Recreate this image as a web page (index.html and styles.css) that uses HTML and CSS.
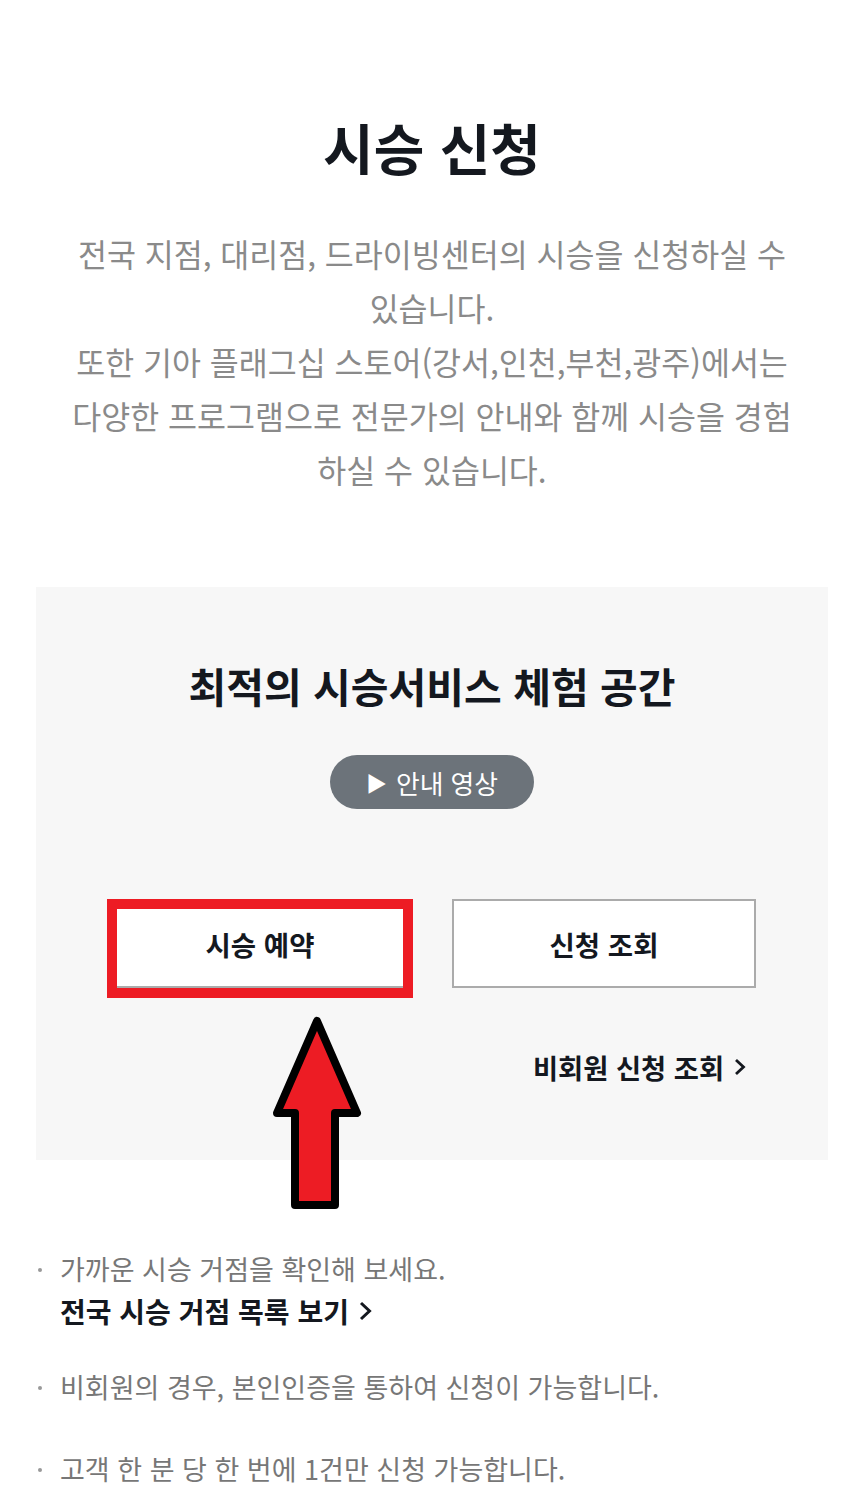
FILE: index.html
```html
<!DOCTYPE html>
<html lang="ko">
<head>
    <meta charset="UTF-8">
    <meta name="viewport" content="width=device-width, initial-scale=1.0">
    <title>시승 신청</title>
    <link rel="stylesheet" href="styles.css">
</head>
<body>
    <div class="page">
        <h1 class="title">시승 신청</h1>
        <p class="intro">
            전국 지점, 대리점, 드라이빙센터의 시승을 신청하실 수 있습니다.<br>
            또한 기아 플래그십 스토어(강서,인천,부천,광주)에서는 다양한 프로그램으로 전문가의 안내와 함께 시승을 경험하실 수 있습니다.
        </p>

        <div class="panel-wrap">
            <div class="panel">
                <h2 class="panel-title">최적의 시승서비스 체험 공간</h2>
                <button class="video-btn"><span class="play">&#9654;</span>안내 영상</button>

                <div class="actions">
                    <div class="btn-row">
                        <div class="btn-slot">
                            <button class="action-btn">시승 예약</button>
                            <!-- annotation box -->
                            <span class="highlight"></span>
                        </div>
                        <div class="btn-slot">
                            <button class="action-btn">신청 조회</button>
                        </div>
                    </div>
                    <a class="more-link guest-link" href="#">비회원 신청 조회
                        <svg class="chev" width="12" height="20" viewBox="0 0 12 20"><path d="M2 3 L9.5 10 L2 17" fill="none" stroke="#14181f" stroke-width="2.8"/></svg>
                    </a>
                </div>
            </div>

            <!-- annotation arrow -->
            <svg class="arrow" width="92" height="200" viewBox="0 0 92 200">
                <polygon points="46,6 86,98 64,98 64,190 24,190 24,98 6,98" fill="#ed1c24" stroke="#000" stroke-width="8" stroke-linejoin="round"/>
            </svg>
        </div>

        <ul class="notes">
            <li>
                <div>
                    가까운 시승 거점을 확인해 보세요.
                    <a class="more-link" href="#">전국 시승 거점 목록 보기
                        <svg class="chev" width="13" height="22" viewBox="0 0 13 22"><path d="M2 3 L10.5 11 L2 19" fill="none" stroke="#14181f" stroke-width="3"/></svg>
                    </a>
                </div>
            </li>
            <li><div>비회원의 경우, 본인인증을 통하여 신청이 가능합니다.</div></li>
            <li><div>고객 한 분 당 한 번에 1건만 신청 가능합니다.</div></li>
        </ul>
    </div>
</body>
</html>
```

FILE: styles.css
```css
body {
    margin: 0;
    padding: 0;
    background-color: #fff;
    font-family: "Noto Sans CJK KR", "Noto Sans", sans-serif;
    color: #14181f;
}

.page {
    padding: 0 36px;
}

.title {
    margin: 114px 0 0;
    font-size: 55px;
    line-height: 65px;
    font-weight: 700;
    text-align: center;
}

.intro {
    margin: 47px 28px 0;
    font-size: 31.5px;
    line-height: 54px;
    color: #8a8a8a;
    text-align: center;
}

/* Panel */
.panel-wrap {
    position: relative;
    margin-top: 91px;
}

.panel {
    display: flex;
    flex-direction: column;
    align-items: center;
    background-color: #f7f7f7;
    padding: 73px 0 75px;
}

.panel-title {
    margin: 0;
    font-size: 41px;
    line-height: 50px;
    font-weight: 700;
}

.video-btn {
    display: flex;
    align-items: center;
    justify-content: center;
    gap: 9px;
    margin-top: 45px;
    width: 204px;
    height: 54px;
    border: none;
    border-radius: 27px;
    background-color: #6c737a;
    color: #fff;
    font-family: inherit;
    font-size: 25.8px;
    padding: 0;
}

.play {
    font-size: 21px;
}

.actions {
    display: flex;
    flex-direction: column;
    width: 648px;
    margin-top: 90px;
}

.btn-row {
    display: flex;
    gap: 40px;
}

.btn-slot {
    position: relative;
    flex: 1;
}

.action-btn {
    display: block;
    width: 100%;
    height: 89px;
    border: 2px solid #ababab;
    background-color: #fff;
    font-family: inherit;
    font-size: 27.5px;
    font-weight: 700;
    color: #14181f;
}

.highlight {
    position: absolute;
    top: 0;
    left: -1px;
    width: 306px;
    height: 99px;
    box-sizing: border-box;
    border: 10px solid #ed1c24;
}

.more-link {
    display: flex;
    align-items: center;
    gap: 10px;
    font-size: 27.3px;
    line-height: 36px;
    font-weight: 700;
    color: #14181f;
    text-decoration: none;
}

.guest-link {
    align-self: flex-end;
    margin: 61px 10px 0 0;
}

.arrow {
    position: absolute;
    left: 235px;
    top: 428px;
}

/* Notes */
.notes {
    list-style: none;
    margin: 88px 0 0;
    padding: 0;
    font-size: 27px;
    line-height: 42px;
    color: #777;
}

.notes li {
    display: flex;
    margin-bottom: 40px;
}

.notes li:first-child {
    margin-bottom: 34px;
}

.notes .more-link {
    font-size: 28px;
    line-height: 42px;
}

.notes li::before {
    content: "";
    flex: none;
    width: 4px;
    height: 4px;
    margin: 20px 18px 0 2px;
    border-radius: 50%;
    background-color: #999;
}
```
